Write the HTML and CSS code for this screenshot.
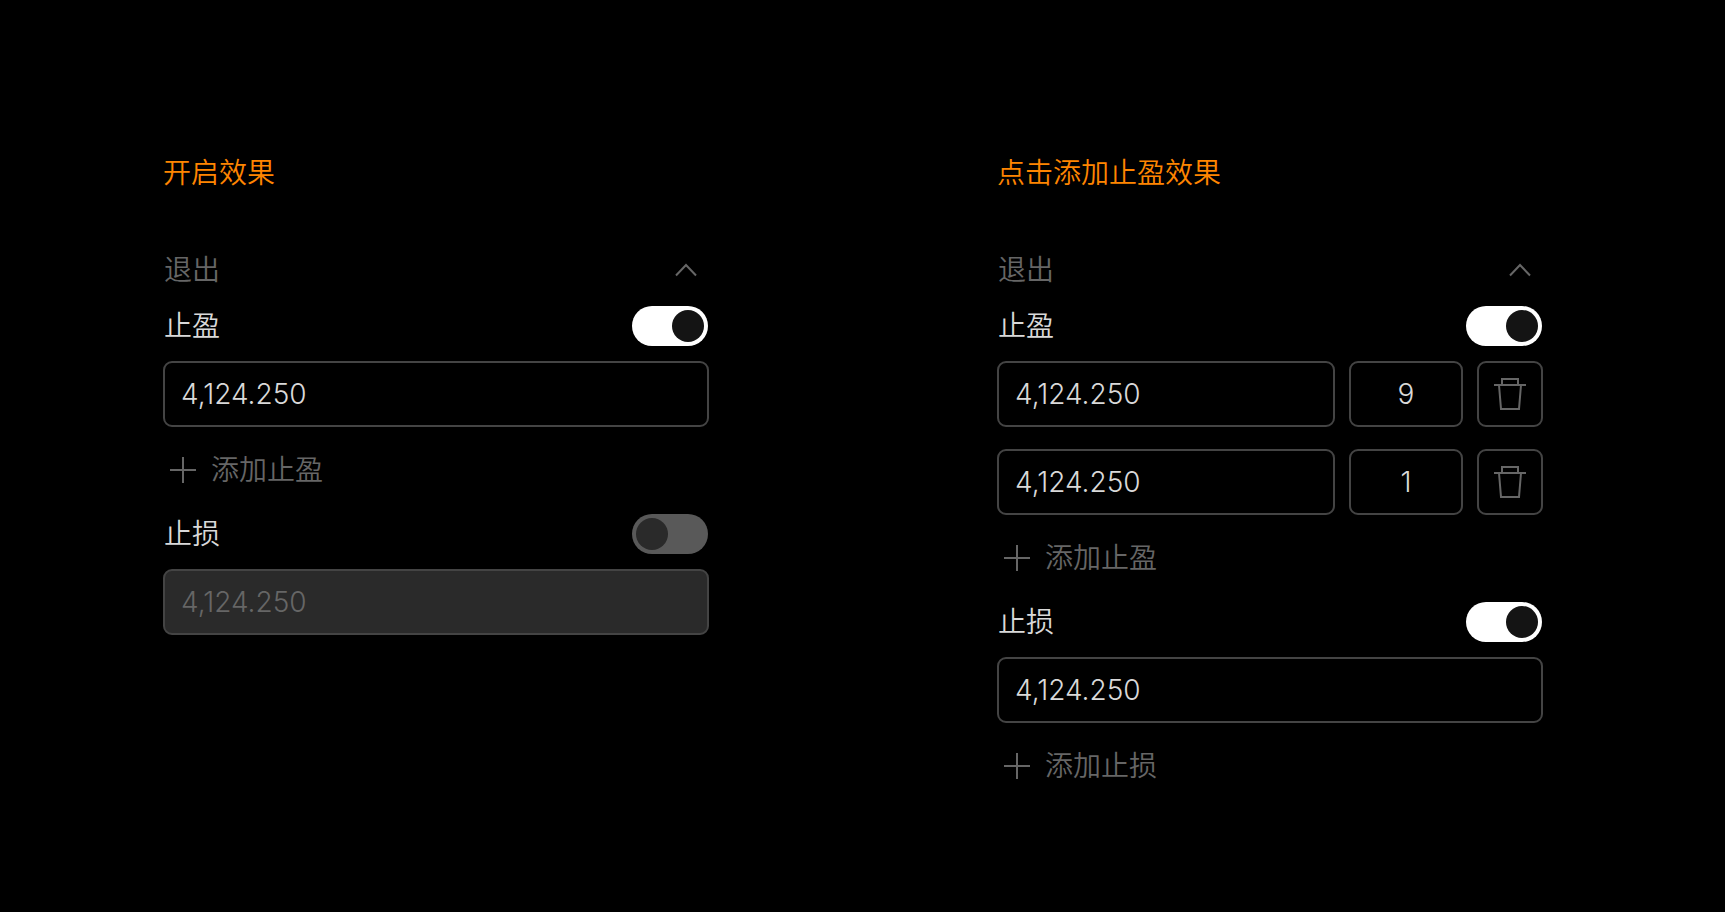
FILE: index.html
```html
<!DOCTYPE html>
<html lang="zh-CN">
<head>
    <meta charset="UTF-8">
    <meta name="viewport" content="width=device-width, initial-scale=1.0">
    <title>止盈止损</title>
    <link rel="stylesheet" href="styles.css">
</head>
<body>
    <svg class="sprite" aria-hidden="true">
        <symbol id="icon-up" viewBox="0 0 24 14">
            <path d="M2 12.5 L12 2 L22 12.5" />
        </symbol>
        <symbol id="icon-plus" viewBox="0 0 26 26">
            <path d="M13 0 V26 M0 13 H26" />
        </symbol>
        <symbol id="icon-trash" viewBox="0 0 32 32">
            <path d="M0 7 H32 M8 7 V1 H24 V7 M5 7 L7 31 H25 L27 7" />
        </symbol>
    </svg>

    <main class="demo">
        <section class="panel">
            <h2 class="panel__title">开启效果</h2>
            <div class="panel__header">
                <span>退出</span>
                <button class="panel__fold" type="button" aria-label="收起"><svg class="icon-up"><use href="#icon-up" /></svg></button>
            </div>

            <div class="group">
                <div class="group__header">
                    <label for="tp-1">止盈</label>
                    <input class="switch" type="checkbox" id="tp-1" checked>
                </div>
                <div class="group__rows">
                    <div class="row">
                        <input class="field" type="text" value="4,124.250" aria-label="止盈价格">
                    </div>
                </div>
                <button class="add" type="button"><svg class="icon-plus"><use href="#icon-plus" /></svg>添加止盈</button>
            </div>

            <div class="group">
                <div class="group__header">
                    <label for="sl-1">止损</label>
                    <input class="switch" type="checkbox" id="sl-1">
                </div>
                <div class="group__rows">
                    <div class="row">
                        <input class="field" type="text" value="4,124.250" aria-label="止损价格" disabled>
                    </div>
                </div>
            </div>
        </section>

        <section class="panel">
            <h2 class="panel__title">点击添加止盈效果</h2>
            <div class="panel__header">
                <span>退出</span>
                <button class="panel__fold" type="button" aria-label="收起"><svg class="icon-up"><use href="#icon-up" /></svg></button>
            </div>

            <div class="group">
                <div class="group__header">
                    <label for="tp-2">止盈</label>
                    <input class="switch" type="checkbox" id="tp-2" checked>
                </div>
                <div class="group__rows">
                    <div class="row">
                        <input class="field" type="text" value="4,124.250" aria-label="止盈价格">
                        <input class="field field--count" type="text" value="9" aria-label="数量">
                        <button class="delete" type="button" aria-label="删除"><svg class="icon-trash"><use href="#icon-trash" /></svg></button>
                    </div>
                    <div class="row">
                        <input class="field" type="text" value="4,124.250" aria-label="止盈价格">
                        <input class="field field--count" type="text" value="1" aria-label="数量">
                        <button class="delete" type="button" aria-label="删除"><svg class="icon-trash"><use href="#icon-trash" /></svg></button>
                    </div>
                </div>
                <button class="add" type="button"><svg class="icon-plus"><use href="#icon-plus" /></svg>添加止盈</button>
            </div>

            <div class="group">
                <div class="group__header">
                    <label for="sl-2">止损</label>
                    <input class="switch" type="checkbox" id="sl-2" checked>
                </div>
                <div class="group__rows">
                    <div class="row">
                        <input class="field" type="text" value="4,124.250" aria-label="止损价格">
                    </div>
                </div>
                <button class="add" type="button"><svg class="icon-plus"><use href="#icon-plus" /></svg>添加止损</button>
            </div>
        </section>
    </main>
</body>
</html>
```
FILE: styles.css
```css
* {
    box-sizing: border-box;
    margin: 0;
    padding: 0;
}

:root {
    --text: #d9d9d9;
    --muted: #666;
    --border: #444;
    --accent: #ff8500;
}

body {
    background: #000;
    color: var(--text);
    font-family: Inter, "Noto Sans CJK SC", sans-serif;
    font-weight: 350;
    font-size: 28px;
    line-height: 40px;
}

button,
input {
    font: inherit;
    color: inherit;
}

button {
    background: transparent;
    border: none;
    cursor: pointer;
}

svg {
    display: block;
    fill: none;
    stroke: var(--muted);
    stroke-width: 2;
}

.sprite {
    display: none;
}

.demo {
    display: grid;
    grid-template-columns: repeat(2, minmax(0, 1fr));
    gap: 288px;
    padding: 153px 182px 60px 163px;
}

/* PANEL */
.panel__title {
    margin-bottom: 57px;
    color: var(--accent);
    font-size: 28px;
    font-weight: 350;
}

.panel__header {
    display: flex;
    align-items: center;
    justify-content: space-between;
    margin-bottom: 16px;
    padding: 0 11px 0 1px;
    color: var(--muted);
}

.icon-up {
    width: 24px;
    height: 14px;
}

/* GROUP */
.group {
    margin-bottom: 24px;
}

.group__header {
    display: flex;
    align-items: center;
    justify-content: space-between;
    margin-bottom: 15px;
    padding: 0 1px;
}

.group__rows {
    display: flex;
    flex-direction: column;
    gap: 22px;
}

.row {
    display: flex;
    gap: 14px;
}

.field {
    flex: 1;
    min-width: 0;
    height: 66px;
    padding: 0 16px;
    background: transparent;
    border: 2px solid var(--border);
    border-radius: 9px;
    outline: none;
}

.field:disabled {
    background: #2a2a2a;
    color: var(--muted);
}

.field--count {
    flex: 0 0 114px;
    text-align: center;
}

.delete {
    display: flex;
    flex: 0 0 66px;
    align-items: center;
    justify-content: center;
    border: 2px solid var(--border);
    border-radius: 9px;
}

.icon-trash {
    width: 32px;
    height: 32px;
}

/* ADD */
.add {
    display: flex;
    align-items: center;
    gap: 15px;
    margin-top: 23px;
    padding-left: 7px;
    color: var(--muted);
}

.icon-plus {
    width: 26px;
    height: 26px;
}

/* SWITCH */
.switch {
    appearance: none;
    display: flex;
    width: 76px;
    height: 40px;
    padding: 4px;
    background: #595959;
    border-radius: 20px;
    cursor: pointer;
}

.switch::before {
    content: "";
    width: 32px;
    height: 32px;
    border-radius: 50%;
    background: #2a2a2a;
}

.switch:checked {
    justify-content: flex-end;
    background: #fff;
}

.switch:checked::before {
    background: #141414;
}
```
